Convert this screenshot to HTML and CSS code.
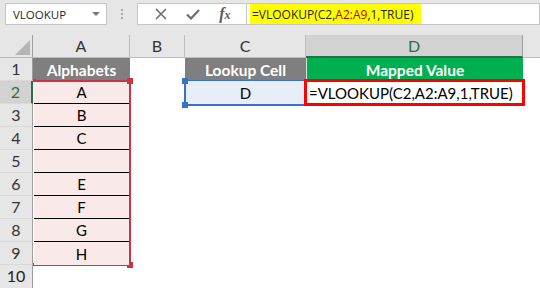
FILE: index.html
```html
<!DOCTYPE html>
<html lang="en">
<head>
    <meta charset="UTF-8">
    <title>VLOOKUP TRUE</title>
    <link rel="stylesheet" href="styles.css">
</head>
<body>

<!-- Name box + formula bar -->
<div class="toolbar">
    <div class="name-box">
        <span>VLOOKUP</span>
        <span class="caret"></span>
    </div>
    <div class="grip"><i></i><i></i><i></i></div>
    <div class="fx-buttons">
        <svg width="12" height="12" viewBox="0 0 12 12"><path d="M1 1 L11 11 M11 1 L1 11" stroke="#6e6e6e" stroke-width="1.6" fill="none"/></svg>
        <svg width="14" height="11" viewBox="0 0 14 11"><path d="M1 5.5 L5 9.5 L13 1" stroke="#6e6e6e" stroke-width="2.2" fill="none"/></svg>
        <span class="fx">f<sub>x</sub></span>
    </div>
    <div class="formula-input">
        <span class="hl">=VLOOKUP(C2,<span class="ref">A2:A9</span>,1,TRUE)</span>
    </div>
</div>

<!-- Sheet grid -->
<div class="sheet">
    <div class="corner"><svg width="33" height="23" viewBox="0 0 33 23"><path d="M15 20 L30 5 L30 20 Z" fill="#b5b5b5"/></svg></div>
    <div class="col-head">A</div>
    <div class="col-head">B</div>
    <div class="col-head">C</div>
    <div class="col-head active">D</div>
    <div class="col-head end"></div>

    <div class="row-head">1</div>
    <div class="cell title">Alphabets</div>
    <div class="cell"></div>
    <div class="cell title">Lookup Cell</div>
    <div class="cell title green">Mapped Value</div>
    <div class="cell"></div>

    <div class="row-head active">2</div>
    <div class="cell letter">A<div class="range red"><b class="h1"></b><b class="h2"></b><b class="h3"></b><b class="h4"></b></div></div>
    <div class="cell"></div>
    <div class="cell lookup">D<div class="range blue"><b class="h1"></b><b class="h2"></b></div></div>
    <div class="cell formula">=VLOOKUP(C2,A2:A9,1,TRUE)</div>
    <div class="cell"></div>

    <div class="row-head">3</div>
    <div class="cell letter">B</div>
    <div class="cell"></div><div class="cell"></div><div class="cell"></div><div class="cell"></div>

    <div class="row-head">4</div>
    <div class="cell letter">C</div>
    <div class="cell"></div><div class="cell"></div><div class="cell"></div><div class="cell"></div>

    <div class="row-head">5</div>
    <div class="cell letter"></div>
    <div class="cell"></div><div class="cell"></div><div class="cell"></div><div class="cell"></div>

    <div class="row-head">6</div>
    <div class="cell letter">E</div>
    <div class="cell"></div><div class="cell"></div><div class="cell"></div><div class="cell"></div>

    <div class="row-head">7</div>
    <div class="cell letter">F</div>
    <div class="cell"></div><div class="cell"></div><div class="cell"></div><div class="cell"></div>

    <div class="row-head">8</div>
    <div class="cell letter">G</div>
    <div class="cell"></div><div class="cell"></div><div class="cell"></div><div class="cell"></div>

    <div class="row-head">9</div>
    <div class="cell letter last">H</div>
    <div class="cell"></div><div class="cell"></div><div class="cell"></div><div class="cell"></div>

    <div class="row-head last">10</div>
    <div class="cell"></div>
    <div class="cell"></div><div class="cell"></div><div class="cell"></div><div class="cell"></div>
</div>

</body>
</html>
```

FILE: styles.css
```css
body {
    margin: 0;
    padding: 0;
    background-color: #fff;
    font-family: Lato, "Liberation Sans", sans-serif;
}

/* ---------- formula bar ---------- */

.toolbar {
    display: flex;
    align-items: flex-start;
    height: 35px;
    padding: 3px 0 0 5px;
    box-sizing: border-box;
    background-color: #e6e6e6;
}

.name-box {
    width: 102px;
    height: 22px;
    box-sizing: border-box;
    border: 1px solid #c6c6c6;
    background-color: #fff;
    display: flex;
    align-items: center;
    justify-content: space-between;
    padding: 0 6px 0 7px;
    font-family: "Open Sans", sans-serif;
    font-size: 11.5px;
    color: #262626;
}

.caret {
    width: 0;
    height: 0;
    border-left: 4px solid transparent;
    border-right: 4px solid transparent;
    border-top: 4px solid #777;
}

.grip {
    width: 30px;
    height: 22px;
    display: flex;
    flex-direction: column;
    align-items: center;
    justify-content: center;
    gap: 2px;
}

.grip i {
    width: 2px;
    height: 2px;
    background-color: #a8a8a8;
}

.fx-buttons {
    width: 110px;
    height: 22px;
    box-sizing: border-box;
    border: 1px solid #c6c6c6;
    background-color: #fff;
    display: flex;
    align-items: center;
    justify-content: space-around;
    padding: 0 6px 0 8px;
}

.fx {
    font-family: "Liberation Serif", serif;
    font-style: italic;
    font-weight: bold;
    font-size: 16px;
    color: #5a5a5a;
    line-height: 1;
}

.fx sub {
    font-size: 12px;
    vertical-align: 0;
}

.formula-input {
    flex: 1;
    height: 22px;
    box-sizing: border-box;
    border: 1px solid #c6c6c6;
    border-left: none;
    background-color: #fff;
    padding-left: 3px;
    display: flex;
}

.hl {
    background-color: #ffff00;
    font-family: "Open Sans", sans-serif;
    font-size: 12px;
    color: #262626;
    line-height: 21px;
    padding: 0 8px 0 2px;
}

.hl .ref {
    color: #c00000;
}

/* ---------- sheet ---------- */

.sheet {
    display: grid;
    grid-template-columns: 33px 97px 55px 121px 217px 1fr;
    grid-auto-rows: 23px;
}

.corner,
.col-head,
.row-head {
    background-color: #e6e6e6;
    box-sizing: border-box;
    color: #333;
    font-size: 16px;
    line-height: 22px;
    text-align: center;
}

.corner {
    border-right: 1px solid #9e9e9e;
    border-bottom: 1px solid #bdbdbd;
}

.col-head {
    border-right: 1px solid #bdbdbd;
    border-bottom: 1px solid #bdbdbd;
}

.col-head.active {
    background-color: #d2d2d2;
    color: #217346;
    border-bottom: 2px solid #217346;
    border-right-color: #9e9e9e;
}

.col-head.end {
    border-right: none;
}

.row-head {
    border-right: 1px solid #9e9e9e;
    border-bottom: 1px solid #d9d9d9;
}

.row-head.last {
    border-bottom: none;
    color: #222;
}

.row-head.active {
    background-color: #d2d2d2;
    color: #217346;
    border-right: 2px solid #217346;
}

.cell {
    box-sizing: border-box;
    font-size: 15px;
    color: #000;
    display: flex;
    align-items: center;
    justify-content: center;
    position: relative;
}

.cell.title {
    background-color: #7f7f7f;
    color: #fff;
    font-weight: bold;
    font-size: 15.5px;
}

.cell.green {
    background-color: #00b050;
    border-left: 1px solid #dcdcdc;
}

.cell.letter {
    background-color: #f9e9e8;
    border-bottom: 1px solid #000;
    margin: 0 1px 0 1px;
}

.cell.letter.last {
    border-bottom: none;
}

.cell.lookup {
    background-color: #e8eef8;
}

.cell.formula {
    justify-content: flex-start;
    padding-left: 3px;
    outline: 3px solid #ff0000;
    outline-offset: -1px;
    z-index: 2;
}

/* range highlight boxes */

.range {
    position: absolute;
    box-sizing: border-box;
    pointer-events: none;
}

.range b {
    position: absolute;
}

.range.red {
    top: -1px;
    left: -1px;
    right: -2px;
    height: 186px;
    border-top: 2px solid #c8373f;
    border-right: 2px solid #c8373f;
    border-bottom: 2px solid #c8373f;
}

.range.red b {
    background-color: #c8373f;
}

.range.red .h1 { top: -4px; right: -4px; width: 6px; height: 6px; }
.range.red .h2 { bottom: -4px; right: -4px; width: 6px; height: 6px; }
.range.red .h3 { top: -3px; left: 0; width: 3px; height: 3px; }
.range.red .h4 { bottom: -2px; left: 0; width: 3px; height: 3px; }

.range.blue {
    top: -1px;
    left: -1px;
    right: -3px;
    bottom: -2px;
    border-top: 1px solid #3a72c6;
    border-left: 2px solid #3a72c6;
    border-bottom: 2px solid #3a72c6;
}

.range.blue b {
    background-color: #3a72c6;
    width: 6px;
    height: 6px;
}

.range.blue .h1 { top: -3px; left: -4px; }
.range.blue .h2 { bottom: -4px; left: -4px; }
```
